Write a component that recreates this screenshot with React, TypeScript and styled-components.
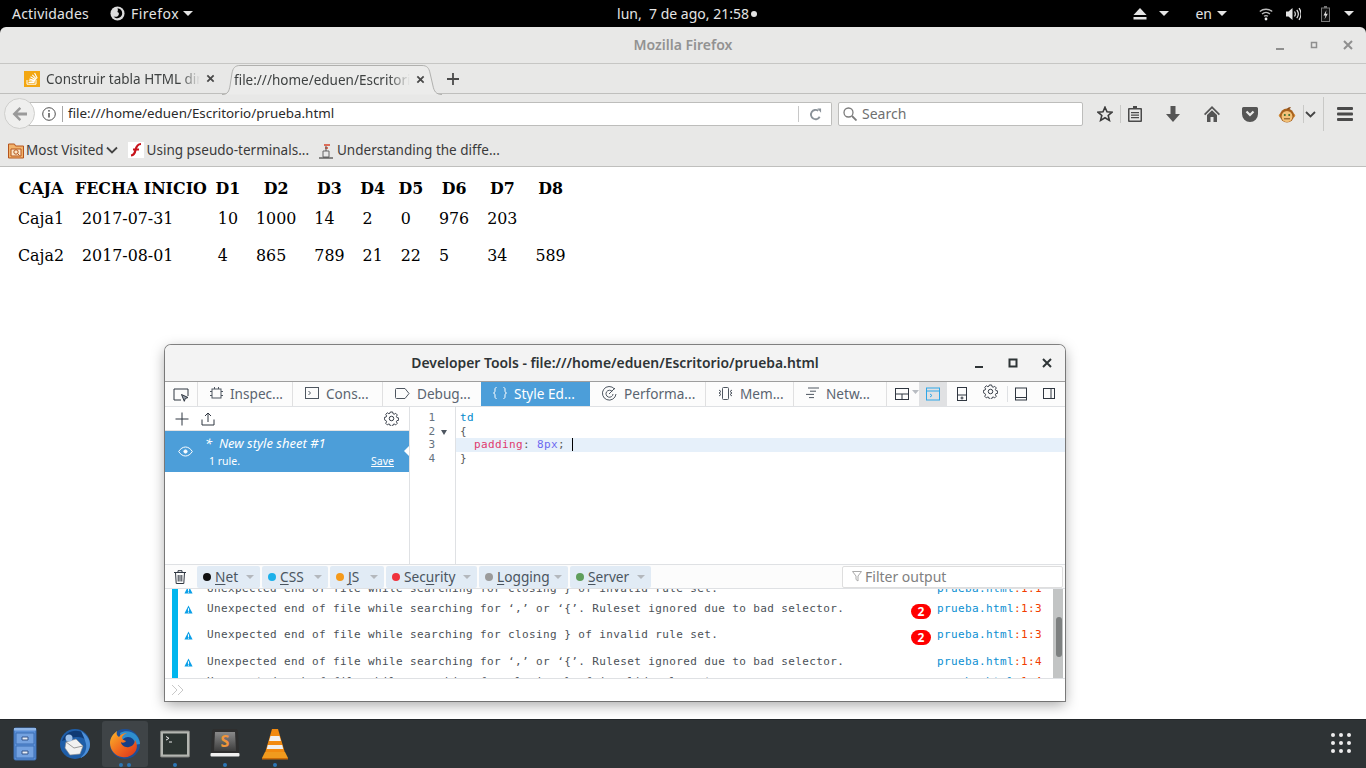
import React from "react";
import styled, { createGlobalStyle } from "styled-components";

const ui = `"Noto Sans", "Open Sans", sans-serif`;
const mono = `"DejaVu Sans Mono", "Liberation Mono", monospace`;

const Global = createGlobalStyle`
  html, body { margin: 0; padding: 0; background: #000; }
  * { box-sizing: border-box; }
`;

const Desktop = styled.div`
  position: relative; width: 1366px; height: 768px; overflow: hidden;
  display: flex; flex-direction: column; background: #000; font-family: ${ui};
`;

/* ---------- GNOME top bar ---------- */
const TopBar = styled.div`
  height: 27px; flex: none; display: grid; grid-template-columns: 1fr auto 1fr;
  align-items: center; color: #e4e4e4; font-size: 14px; padding: 0 12px;
`;
const BarGroup = styled.div<{ $end?: boolean }>`
  display: flex; align-items: center; justify-content: ${p => (p.$end ? "flex-end" : "flex-start")};
`;
const BarItem = styled.span<{ $ml?: number; $ls?: number }>`
  display: inline-flex; align-items: center; margin-left: ${p => p.$ml ?? 0}px; white-space: pre;
  letter-spacing: ${p => p.$ls ?? 0}px;
`;
const Caret = styled.span<{ $ml?: number; $c?: string }>`
  display: inline-block; width: 0; height: 0; margin-left: ${p => p.$ml ?? 0}px;
  border-left: 5px solid transparent; border-right: 5px solid transparent;
  border-top: 5px solid ${p => p.$c ?? "#e4e4e4"};
`;
const Clock = styled.div`
  display: flex; align-items: center; white-space: pre; margin-left: 8px;
`;
const ClockDot = styled.span`
  width: 6px; height: 6px; border-radius: 50%; background: #e4e4e4; margin-left: 2px;
`;

/* ---------- Firefox window ---------- */
const BrowserWindow = styled.div`
  flex: 1; min-height: 0; display: flex; flex-direction: column;
  background: #e8e8e7; border-radius: 6px 6px 0 0; overflow: hidden;
`;
const TitleBar = styled.div`
  position: relative; height: 37px; flex: none; display: flex; align-items: center; justify-content: center;
  border-bottom: 1px solid #c6c6c4; color: #929292; font-size: 14px; font-weight: 600; padding-bottom: 2px;
`;
const WinControls = styled.div`
  position: absolute; right: 10px; top: 10px; display: flex; align-items: center; gap: 18px; height: 16px;
`;
const TabStrip = styled.div`
  position: relative; height: 30px; flex: none; display: flex; align-items: stretch;
  padding-left: 10px; border-bottom: 1px solid #bfbfbd; font-size: 13.5px;
`;
const Tab = styled.div`
  position: relative; display: flex; align-items: center; height: 29px; width: 212px; padding-left: 14px;
  color: #3f4242; white-space: nowrap;
`;
const ActiveTab = styled.div`
  position: relative; display: flex; align-items: center; height: 30px; width: 220px; padding: 0 0 1px 12px;
  margin-top: 1px; color: #3f4242; white-space: nowrap; z-index: 1;
`;
const TabShape = styled.svg`
  position: absolute; left: 0; top: 0; z-index: -1;
`;
const TabTitle = styled.span<{ $w: number; $ml: number }>`
  display: block; width: ${p => p.$w}px; overflow: hidden; margin-left: ${p => p.$ml}px;
  -webkit-mask-image: linear-gradient(90deg, #000 88%, transparent);
  mask-image: linear-gradient(90deg, #000 88%, transparent);
`;
const TabClose = styled.span`
  margin-left: 6px; display: inline-flex; color: #4a4a4a;
`;
const NewTab = styled.span`
  display: inline-flex; margin: 8px 0 0 4px; height: 16px;
`;
const NavBar = styled.div`
  position: relative; height: 40px; flex: none; display: flex; align-items: center; padding: 0 0 0 24px;
`;
const BackButton = styled.div`
  position: absolute; left: 4px; top: 4px; width: 31px; height: 31px; border-radius: 50%; z-index: 2;
  background: #efefee; border: 1px solid #cfcfcd; display: flex; align-items: center; justify-content: center;
`;
const UrlBar = styled.div`
  width: 808px; height: 24px; background: #fff; border: 1px solid #bdbdbb; border-left: 0;
  border-radius: 0 2px 2px 0; display: flex; align-items: center; padding-left: 17px;
  font-size: 13.4px; color: #2a2a2a;
`;
const UrlIcon = styled.span`
  display: flex; margin-left: 1px;
`;
const UrlSep = styled.span`
  width: 1px; height: 16px; background: #a6a6a6; margin: 0 5px 0 6px; flex: none;
`;
const UrlText = styled.span`
  flex: 1; padding-bottom: 2px;
`;
const ReloadCell = styled.span`
  width: 33px; height: 16px; border-left: 1px solid #c8c8c8; display: flex; align-items: center; justify-content: center;
`;
const SearchBox = styled.div`
  width: 245px; height: 24px; margin-left: 6px; background: #fff; border: 1px solid #bdbdbb; border-radius: 2px;
  display: flex; align-items: center; gap: 5px; padding-left: 4px; font-size: 14px; color: #6f6f6f;
`;
const SearchLabel = styled.span`
  padding-bottom: 2px;
`;
const NavIcons = styled.div`
  position: relative; flex: 1; height: 100%;
`;
const NavIcon = styled.span<{ $x: number }>`
  position: absolute; left: ${p => p.$x}px; top: 12px; display: flex;
`;
const NavSep = styled.span<{ $x: number; $h?: number; $t?: number }>`
  position: absolute; left: ${p => p.$x}px; top: ${p => p.$t ?? 10}px; width: 1px; height: ${p => p.$h ?? 20}px; background: #c9c9c7;
`;
const BookmarksBar = styled.div`
  height: 33px; flex: none; display: flex; align-items: center; padding: 0 0 1px 8px;
  border-bottom: 1px solid #bfbfbd; font-size: 13.5px; color: #3a3a3a;
`;
const Bookmark = styled.span<{ $ml?: number; $gap?: number }>`
  display: inline-flex; align-items: center; gap: ${p => p.$gap ?? 3}px; margin-left: ${p => p.$ml ?? 0}px; white-space: nowrap;
`;
const Page = styled.div`
  flex: 1; background: #fff; padding: 9px 8px 8px; font-family: "DejaVu Serif", serif; color: #000;
`;
const DataTable = styled.table`
  border-spacing: 2px; font-size: 15.85px;
`;
const HeadCell = styled.th`
  padding: 1px; font-weight: 700; text-align: center; white-space: nowrap;
`;
const DataCell = styled.td`
  padding: 8px; text-align: left; white-space: nowrap;
`;

/* ---------- Developer tools window (free-floating) ---------- */
const DevWindow = styled.div`
  position: absolute; left: 165px; top: 345px; width: 900px; height: 356px; z-index: 5;
  display: flex; flex-direction: column; background: #fff; border-radius: 6px 6px 0 0; overflow: hidden;
  box-shadow: 0 0 0 1px rgba(70,70,70,.65), 0 4px 14px rgba(0,0,0,.35);
`;
const DevTitle = styled.div`
  position: relative; height: 37px; flex: none; background: #f3f3f3; border-bottom: 1px solid #9e9e9e;
  display: flex; align-items: center; justify-content: center; color: #2e3436; font-size: 13.9px; font-weight: 600; padding-bottom: 2px;
`;
const DevControls = styled.div`
  position: absolute; right: 11px; top: 11px; display: flex; gap: 20px; align-items: center; height: 14px;
`;
const DevTabs = styled.div`
  position: relative; height: 25px; flex: none; display: flex; background: #fcfcfc; border-bottom: 1px solid #dfe1e4;
`;
const PickCell = styled.div`
  width: 33px; display: flex; align-items: center; justify-content: center; border-right: 1px solid #e0e0e1; padding-top: 2px;
`;
const DevTab = styled.div<{ $w: number; $active?: boolean; $plain?: boolean }>`
  width: ${p => p.$w}px; flex: none; display: flex; align-items: center; gap: 7px; padding: 0 0 2px 12px;
  font-size: 13.6px; white-space: nowrap;
  color: ${p => (p.$active ? "#fff" : "#5a6470")};
  background: ${p => (p.$active ? "#4c9ed9" : "transparent")};
  border-right: ${p => (p.$active || p.$plain ? "0" : "1px solid #e0e0e1")};
`;
const ToolButtons = styled.div`
  position: relative; flex: 1;
`;
const ToolHighlight = styled.span`
  position: absolute; left: 32px; top: 0; width: 28px; height: 24px; background: #e0e1e3;
`;
const ToolIcon = styled.span<{ $x: number; $t?: number }>`
  position: absolute; left: ${p => p.$x}px; top: ${p => p.$t ?? 5}px; display: flex;
`;
const ToolSep = styled.span`
  position: absolute; left: 120px; top: 4px; width: 1px; height: 16px; background: #dfe1e4;
`;
const EditorPane = styled.div`
  height: 158px; flex: none; display: flex; border-bottom: 1px solid #dfe1e4;
`;
const Sidebar = styled.div`
  width: 245px; flex: none; border-right: 1px solid #dfe1e4; display: flex; flex-direction: column;
`;
const SidebarTools = styled.div`
  height: 24px; flex: none; display: flex; align-items: center; padding: 0 10px; gap: 12px; border-bottom: 1px solid #e3e3e3;
`;
const ToolSpacer = styled.span`
  flex: 1;
`;
const SheetItem = styled.div`
  position: relative; height: 41px; flex: none; background: #4c9ed9; color: #fff; padding-left: 13px;
  display: grid; grid-template-columns: 27px 1fr;  align-items: center;
`;
const SheetName = styled.div`
  font-size: 13px; font-style: italic; height: 19px; line-height: 17px; white-space: pre;
`;
const SheetMeta = styled.div`
  display: flex; justify-content: space-between; padding: 0 15px 0 4px; font-size: 10.5px; line-height: 14px;
`;
const SaveLink = styled.span`
  text-decoration: underline;
`;
const SheetPointer = styled.span`
  position: absolute; right: 0; top: 15px; width: 0; height: 0;
  border-top: 5px solid transparent; border-bottom: 5px solid transparent; border-right: 5px solid #fff;
`;
const Gutter = styled.div`
  width: 46px; flex: none; border-right: 1px solid #dfe1e4; padding-top: 4px; padding-right: 20px;
  font: 11px/13.6px ${mono}; color: #667380; text-align: right; position: relative;
`;
const GutterLine = styled.div`
  height: 13.6px;
`;
const FoldMark = styled.span`
  position: absolute; left: 31px; top: 23px; width: 0; height: 0;
  border-left: 3px solid transparent; border-right: 3px solid transparent; border-top: 5px solid #4e5660;
`;
const CodeArea = styled.div`
  flex: 1; padding-top: 4px; font: 11px/13.6px ${mono}; letter-spacing: .38px; color: #585959;
`;
const CodeLine = styled.div<{ $active?: boolean }>`
  height: 13.6px; padding-left: 4px; white-space: pre; background: ${p => (p.$active ? "#e6f0fa" : "transparent")};
`;
const Tok = styled.span<{ $c: string }>`
  color: ${p => p.$c};
`;
const CodeCursor = styled.span`
  display: inline-block; width: 1px; height: 13px; background: #000; vertical-align: top; margin-left: 0;
`;
const FilterBar = styled.div`
  height: 24px; flex: none; display: flex; align-items: center; padding-left: 9px; gap: 2px; background: #fcfcfc;
  border-bottom: 1px solid #dfe1e4; position: relative;
`;
const TrashCell = styled.span`
  display: flex; width: 21px; 
`;
const FilterChip = styled.div<{ $w: number }>`
  width: ${p => p.$w}px; height: 22px; flex: none; background: #e1ebf5; border-radius: 2px;
  display: flex; align-items: center; padding-left: 6px; font-size: 13.7px; color: #4a5560; white-space: nowrap;
`;
const ChipDot = styled.span<{ $c: string }>`
  width: 8px; height: 8px; border-radius: 50%; background: ${p => p.$c}; margin-right: 4px; flex: none;
`;
const ChipKey = styled.span`
  text-decoration: underline; text-underline-offset: 2px;
`;
const ChipCaret = styled.span`
  margin-left: auto; margin-right: 6px; width: 0; height: 0;
  border-left: 4px solid transparent; border-right: 4px solid transparent; border-top: 4px solid #b4b8bd;
`;
const FilterInput = styled.div`
  position: absolute; left: 677px; top: 1px; width: 221px; height: 22px; background: #fff; border: 1px solid #dedede;
  border-radius: 2px; display: flex; align-items: center; gap: 3px; padding: 0 0 2px 9px; color: #808080; font-size: 14px;
`;
const Output = styled.div`
  position: relative; height: 90px; flex: none; overflow: hidden; border-bottom: 1px solid #dfe1e4;
  font: 11px/14px ${mono}; letter-spacing: .38px; color: #4b5157;
`;
const OutputBar = styled.span`
  position: absolute; left: 7px; top: 0; bottom: 0; width: 6px; background: #00b6ee; 
`;
const OutputList = styled.div`
  margin-top: -10px;
`;
const LogRow = styled.div<{ $tall?: boolean }>`
  height: ${p => (p.$tall ? 26.4 : 20)}px; display: flex; align-items: flex-start; padding: 3px 0 0 19px;
  position: relative; white-space: pre;
`;
const LogIcon = styled.span`
  width: 23px; flex: none; display: flex; position: relative; top: 3px;
`;
const LogText = styled.span`
  flex: none; width: 730px;
`;
const LogBadge = styled.span`
  position: absolute; left: 746px; top: 4.6px; width: 20px; height: 15px; border-radius: 8px; background: #f00; color: #fff;
  font: 700 12px/15px ${ui}; letter-spacing: 0; text-align: center;
`;
const LogSource = styled.span`
  color: #0a8fd2;
`;
const LogPos = styled.span`
  color: #f13c00;
`;
const ScrollTrack = styled.div`
  position: absolute; right: 2px; top: 0; bottom: 0; width: 10px; background: #c2c4c4;
`;
const ScrollThumb = styled.div`
  position: absolute; left: 3px; top: 28px; width: 6px; height: 40px; border-radius: 3px; background: #7d8080;
`;
const ConsoleInput = styled.div`
  flex: 1; display: flex; align-items: center; padding-left: 6px;
`;

/* ---------- Dock ---------- */
const Dock = styled.div`
  height: 49px; flex: none; background: #2e3335; display: flex; align-items: center; padding-left: 2px; gap: 4px;
  border-top: 1px solid #23272a; position: relative;
`;
const DockSlot = styled.div<{ $active?: boolean }>`
  position: relative; width: 46px; height: 46px; flex: none;
  display: flex; align-items: center; justify-content: center; border-radius: 3px;
  background: ${p => (p.$active ? "#3f4447" : "transparent")};
`;
const DockDots = styled.span`
  position: absolute; bottom: 0; left: 0; right: 0; display: flex; gap: 4px; justify-content: center;
`;
const DockDot = styled.span`
  width: 4px; height: 4px; border-radius: 50%; background: #2d77b5;
`;
const AppGrid = styled.div`
  position: absolute; right: 15px; top: 13px; display: grid; grid-template-columns: repeat(3, 4px); gap: 4px;
`;
const AppGridDot = styled.span`
  width: 4px; height: 4px; border-radius: 50%; background: #eee;
`;

/* ---------- Icons ---------- */
const Gear = ({ s = 16, c = "#2f3640" }: { s?: number; c?: string }) => (
  <svg width={s} height={s} viewBox="0 0 16 16" fill="none" stroke={c} strokeWidth={1.05}>
    <circle cx="8" cy="8" r="2.400" />
    <path d="M6.700 1h2.600l.4 1.900 1.300.6 1.700-1 1.800 1.800-1 1.700.6 1.300 1.900.4v2.600l-1.900.4-.6 1.300 1 1.700-1.800 1.800-1.700-1-1.300.6-.4 1.900H6.700l-.4-1.900-1.300-.6-1.700 1-1.800-1.800 1-1.700-.6-1.300L0 9.700V7.100l1.900-.4.6-1.300-1-1.700 1.800-1.800 1.700 1 1.300-.6z" transform="translate(.4 .1) scale(.95)" />
  </svg>
);
const Warn = () => (
  <svg width="9" height="9" viewBox="0 0 10 10"><path d="M5 .5 9.500 9.500H.5z" fill="#0a9fe8" /><rect x="4.400" y="3.600" width="1.200" height="3" fill="#fff" /><rect x="4.400" y="7.300" width="1.200" height="1.200" fill="#fff" /></svg>
);
const Cross = ({ s = 10, c = "#4a4a4a", w = 2 }: { s?: number; c?: string; w?: number }) => (
  <svg width={s} height={s} viewBox="0 0 10 10" stroke={c} strokeWidth={w}><path d="M1.500 1.500l7 7M8.500 1.500l-7 7" /></svg>
);
const FirefoxBadge = () => (
  <svg width="15" height="15" viewBox="0 0 16 16"><circle cx="8" cy="8" r="7.500" fill="#dcdcdc" /><path d="M8 2.500c3 .3 5 2.400 5 5.300 0 2.900-2.400 5.200-5.200 5.200-1.600 0-3-.7-4-1.900 2.400 1 5.400 0 5.700-2.700.1-1.100-.9-2-1.700-2 .7-1 .8-2.400.2-3.900z" fill="#000" /></svg>
);
const SOIcon = () => (
  <svg width="16" height="16" viewBox="0 0 16 16"><rect width="16" height="16" fill="#f3a712" /><path d="M3 9v4.200h9V9" fill="none" stroke="#fff" strokeWidth="1" /><path d="M4.500 11.500h6M4.700 9.800l6 .6M5.300 8l5.800 1.600M6.500 5.800l5.200 3M8.300 3.800l4.200 4.300M10.600 2l2.600 5.300" stroke="#fff" strokeWidth="1.100" /></svg>
);
const FolderBm = () => (
  <svg width="16" height="18" viewBox="0 0 16 18"><path d="M.5 3h6l1 2h8v12H.5z" fill="#f2b36c" stroke="#b5541c" /><path d="M3 8h10v7H3z" fill="#fbe6c8" stroke="#b5541c" /><circle cx="8" cy="11" r="2.200" fill="none" stroke="#b5541c" /><path d="M9.500 12.500l2 2" stroke="#b5541c" /></svg>
);
const FlashBm = () => (
  <svg width="16" height="16" viewBox="0 0 16 16"><rect width="16" height="16" fill="#fff" /><path d="M13 2C9 2 8.200 5 7.500 8 7 11 6 13 3 13.500" fill="none" stroke="#c8141c" strokeWidth="2.200" /><path d="M5 7.500h6" stroke="#c8141c" strokeWidth="1.800" /></svg>
);
const UnixBm = () => (
  <svg width="16" height="18" viewBox="0 0 16 18"><path d="M5 10h6v6H5z" fill="#e9e9e9" stroke="#666" /><path d="M6 4h6M7 7h3" stroke="#d9442b" strokeWidth="1.600" /><path d="M8 5v5" stroke="#555" /><path d="M1 17h14" stroke="#222" strokeWidth="1.200" /></svg>
);
const Monkey = () => (
  <svg width="18" height="18" viewBox="0 0 18 18"><circle cx="2.800" cy="9.500" r="2" fill="#d08a3a" /><circle cx="15.200" cy="9.500" r="2" fill="#d08a3a" /><circle cx="9" cy="9.500" r="7" fill="#a8621e" /><ellipse cx="9" cy="10.500" rx="5.400" ry="5.500" fill="#f3c27a" /><path d="M9 3c1-2 3-2 4-1.500-1 1-2 2-4 2z" fill="#8a4a14" /><circle cx="6.800" cy="9" r="1" fill="#2f6b2f" /><circle cx="11.200" cy="9" r="1" fill="#2f6b2f" /><path d="M6 12.800h6" stroke="#7a4a1a" /></svg>
);
const Cabinet = () => (
  <svg width="24" height="34" viewBox="0 0 24 34"><rect x="1" y="1" width="22" height="32" rx="1.500" fill="#5b8fd6" stroke="#3a6cb0" /><rect x="1" y="1" width="22" height="2.500" fill="#8fb6e8" /><path d="M3 6h18v11H3zM3 19h18v12H3z" fill="#74a2e0" stroke="#3d6fb4" /><path d="M9 10h6v3H9zM9 24h6v3H9z" fill="#e8edf4" stroke="#34558a" /></svg>
);
const Thunderbird = () => (
  <svg width="32" height="32" viewBox="0 0 32 32"><circle cx="16" cy="16" r="15" fill="#1f5ea8" /><path d="M3 13C6 4 16 0 25 5c4 3 6 8 6 12-3-5-7-8-12-8-6 0-9 2-16 4z" fill="#0f3a74" /><path d="M22 3c5 3 9 8 9 13s-3 12-10 14c5-4 7-9 6-14-1-4-3-9-5-13z" fill="#4c8fd8" /><path d="M7 14l10-3 7 7-3 8-10 1-5-7z" fill="#f1f1f1" stroke="#8b8b8b" strokeWidth=".6" /><path d="M7 14l8 6 9-2" fill="none" stroke="#9a9a9a" /><circle cx="10" cy="10" r="3.500" fill="#9fc2ea" /></svg>
);
const Firefox = () => (
  <svg width="32" height="32" viewBox="0 0 32 32"><defs><linearGradient id="ffo" x1="0" y1="0" x2="1" y2="1"><stop offset="0" stopColor="#fbb72a" /><stop offset=".55" stopColor="#f0641e" /><stop offset="1" stopColor="#d8331c" /></linearGradient></defs><circle cx="16" cy="16" r="15" fill="#1d4f96" /><path d="M11 5c5-3 12-2 16 2 3 3 4 7 4 9l-6 1-8-2-5-5z" fill="#2f8fce" /><circle cx="19" cy="16" r="7" fill="#163f86" /><path d="M8 3c-1 3 0 5 2 6 2-3 5-4 8-4-3 1-5 3-5 5 0 1 1 2 4 3-1 2-4 2-5 1 0 3 4 6 8 5 4-1 6-4 6-7 2 3 3 8 0 12-3 4-8 6-13 5C6 28 1 22 1 15 1 10 4 6 8 3z" fill="url(#ffo)" /></svg>
);
const Terminal = () => (
  <svg width="30" height="30" viewBox="0 0 30 30"><rect x=".5" y="2" width="29" height="26" rx="1" fill="#b4b6b1" stroke="#7c7e7a" /><rect x="3" y="4.500" width="24" height="21" fill="#2c3431" /><path d="M6 7.500l3 1.800-3 1.800M9 13h3" stroke="#e8e8e8" fill="none" /></svg>
);
const Sublime = () => (
  <svg width="30" height="30" viewBox="0 0 30 30"><defs><linearGradient id="sbl" x1="0" y1="0" x2="0" y2="1"><stop offset="0" stopColor="#8a8a8a" /><stop offset="1" stopColor="#3d3d3d" /></linearGradient></defs><rect x=".5" y="24" width="29" height="3.500" rx="1" fill="#f0f0f0" /><path d="M2 2c0-1 1-2 2-2h22c1 0 2 1 2 2l1 22H1z" fill="#2e2e2e" /><path d="M5 3h20l1 19H4z" fill="url(#sbl)" /><text x="15" y="18" fontSize="16" fontWeight="700" fontFamily="'Noto Sans', sans-serif" fill="#f0953a" textAnchor="middle">S</text></svg>
);
const Vlc = () => (
  <svg width="28" height="32" viewBox="0 0 28 32"><path d="M11 1h6l7 24H4z" fill="#f28a10" /><path d="M9.500 8h9l1.400 5H8.100zM6.800 17h14.400l1 4H5.800z" fill="#f0f0f0" /><path d="M4 24h20l3 6H1z" fill="#f19a1e" /><path d="M1 30h26v1.500H1z" fill="#c96a08" /></svg>
);

const rows = [
  ["Caja1", "2017-07-31", "10", "1000", "14", "2", "0", "976", "203", ""],
  ["Caja2", "2017-08-01", "4", "865", "789", "21", "22", "5", "34", "589"],
];
const heads = ["CAJA", "FECHA INICIO", "D1", "D2", "D3", "D4", "D5", "D6", "D7", "D8"];

const chips: { w: number; c: string; pre: string; key: string; post: string }[] = [
  { w: 63, c: "#111", pre: "", key: "N", post: "et" },
  { w: 66, c: "#1cb0ea", pre: "", key: "C", post: "SS" },
  { w: 54, c: "#f59a1a", pre: "", key: "J", post: "S" },
  { w: 91, c: "#f0323c", pre: "Sec", key: "u", post: "rity" },
  { w: 89, c: "#9b9b9b", pre: "", key: "L", post: "ogging" },
  { w: 81, c: "#5f9e5b", pre: "", key: "S", post: "erver" },
];

const logs = [
  { t: "Unexpected end of file while searching for closing } of invalid rule set.", l: ":1:1" },
  { t: "Unexpected end of file while searching for ‘,’ or ‘{’. Ruleset ignored due to bad selector.", l: ":1:3", b: true },
  { t: "Unexpected end of file while searching for closing } of invalid rule set.", l: ":1:3", b: true },
  { t: "Unexpected end of file while searching for ‘,’ or ‘{’. Ruleset ignored due to bad selector.", l: ":1:4" },
  { t: "Unexpected end of file while searching for closing } of invalid rule set.", l: ":1:4" },
];

export default function App() {
  return (
    <Desktop>
      <Global />
      <TopBar>
        <BarGroup>
          <BarItem $ls={0.2}>Actividades</BarItem>
          <BarItem $ml={21}><FirefoxBadge /></BarItem>
          <BarItem $ml={6} $ls={0.5}>Firefox</BarItem>
          <Caret $ml={4} />
        </BarGroup>
        <Clock>lun,  7 de ago, 21:58<ClockDot /></Clock>
        <BarGroup $end>
          <BarItem><svg width="14" height="12" viewBox="0 0 14 12" fill="#e4e4e4"><path d="M7 0l6.500 7H.5z" /><rect x="0.500" y="9" width="13" height="2.500" /></svg></BarItem>
          <Caret $ml={12} />
          <BarItem $ml={26}>en</BarItem>
          <Caret $ml={5} />
          <BarItem $ml={32}><svg width="14" height="14" viewBox="0 0 14 14" fill="none" stroke="#bbb" strokeWidth="1.300"><path d="M.8 4.500c3.500-3 9-3 12.400 0M3 7c2.300-2 5.700-2 8 0M5 9.300c1.200-.9 2.800-.9 4 0" /><circle cx="7" cy="12" r="1.400" fill="#eee" stroke="none" /></svg></BarItem>
          <BarItem $ml={13}><svg width="15" height="14" viewBox="0 0 15 14"><path d="M0 4.500h2.500L6.500 1v12L2.500 9.500H0z" fill="#e4e4e4" /><path d="M8.500 4.500c1 1.500 1 3.500 0 5M10.800 2.800c1.800 2.500 1.800 6 0 8.400M13 1.200c2.500 3.500 2.500 8 0 11.600" fill="none" stroke="#e4e4e4" strokeWidth="1.200" /></svg></BarItem>
          <BarItem $ml={20}><svg width="9" height="16" viewBox="0 0 9 16"><path d="M3 0h3v1.500h3V16H0V1.500h3z" fill="#777" /><rect x="1" y="2.500" width="7" height="12.500" fill="#111" /><path d="M5.500 4L2.500 9.500h2L3.500 13.500 6.800 7.800H4.800z" fill="#e4e4e4" /></svg></BarItem>
          <Caret $ml={14} />
        </BarGroup>
      </TopBar>

      <BrowserWindow>
        <TitleBar>
          Mozilla Firefox
          <WinControls>
            <svg width="16" height="16" viewBox="0 0 16 16"><rect x="4" y="11" width="8" height="2" fill="#8f8f8f" /></svg>
            <svg width="16" height="16" viewBox="0 0 16 16"><rect x="5.500" y="5.500" width="5" height="5" fill="none" stroke="#8f8f8f" strokeWidth="1.500" /></svg>
            <svg width="16" height="16" viewBox="0 0 16 16" stroke="#8f8f8f" strokeWidth="2"><path d="M4 4l8 8M12 4l-8 8" /></svg>
          </WinControls>
        </TitleBar>
        <TabStrip>
          <Tab>
            <SOIcon />
            <TabTitle $w={154} $ml={6}>Construir tabla HTML dinámica</TabTitle>
            <TabClose><Cross s={9} /></TabClose>
          </Tab>
          <ActiveTab>
            <TabShape width="220" height="30" viewBox="0 0 220 30"><path d="M0 29.500C6 29.500 7 26 8 21L10 8C11 3 13 .5 18 .5H200C205 .5 207 3 208 8L211 21C212 26 214 29.500 220 29.500" fill="#ececeb" stroke="#b0b0ae" /></TabShape>
            <TabTitle $w={176} $ml={0}>file:///home/eduen/Escritorio/prueba</TabTitle>
            <TabClose><Cross s={9} /></TabClose>
          </ActiveTab>
          <NewTab><svg width="14" height="14" viewBox="0 0 14 14" stroke="#4a4a4a" strokeWidth="1.800"><path d="M7 1v12M1 7h12" /></svg></NewTab>
        </TabStrip>
        <NavBar>
          <BackButton><svg width="16" height="14" viewBox="0 0 16 14" fill="#9a9a9a"><path d="M7.500 0l1.700 1.700L5.500 5.500H15v3H5.500l3.700 3.800L7.500 14 .5 7z" /></svg></BackButton>
          <UrlBar>
            <UrlIcon><svg width="14" height="14" viewBox="0 0 14 14" fill="none" stroke="#4e4e4e"><circle cx="7" cy="7" r="6.300" /><path d="M7 6v4.500" strokeWidth="1.500" /><circle cx="7" cy="3.800" r=".9" fill="#4e4e4e" stroke="none" /></svg></UrlIcon>
            <UrlSep />
            <UrlText>file:///home/eduen/Escritorio/prueba.html</UrlText>
            <ReloadCell><svg width="13" height="13" viewBox="0 0 14 14" fill="none" stroke="#8a9299" strokeWidth="2"><path d="M11.500 9.500A5 5 0 1 1 10 3" /><path d="M9 .5h4v4.500z" fill="#8a9299" stroke="none" /></svg></ReloadCell>
          </UrlBar>
          <SearchBox>
            <svg width="14" height="14" viewBox="0 0 14 14" fill="none" stroke="#7b7b7b" strokeWidth="1.300"><circle cx="5.500" cy="5.500" r="4.500" /><path d="M9 9l4.500 4.500" strokeWidth="1.800" /></svg>
            <SearchLabel>Search</SearchLabel>
          </SearchBox>
          <NavIcons>
            <NavIcon $x={14}><svg width="16" height="16" viewBox="0 0 16 16" fill="none" stroke="#3c3c3c" strokeWidth="1.600"><path d="M8 1.200l2 4.600 5 .4-3.800 3.300 1.200 4.900L8 11.800l-4.400 2.600 1.200-4.900L1 6.200l5-.4z" /></svg></NavIcon>
            <NavSep $x={37} $t={11} $h={18} />
            <NavIcon $x={45}><svg width="14" height="16" viewBox="0 0 14 16"><path d="M5 0h4v2h4a1 1 0 0 1 1 1v12a1 1 0 0 1-1 1H1a1 1 0 0 1-1-1V3a1 1 0 0 1 1-1h4z" fill="#4a4a4a" /><rect x="1.500" y="3.500" width="11" height="11" fill="#e8e8e7" /><path d="M3 6h8v1.300H3zM3 8.500h8v1.300H3zM3 11h8v1.300H3z" fill="#4a4a4a" /></svg></NavIcon>
            <NavIcon $x={83}><svg width="14" height="16" viewBox="0 0 14 16" fill="#555"><path d="M4.500 0h5v8H14l-7 8-7-8h4.500z" /></svg></NavIcon>
            <NavIcon $x={121}><svg width="16" height="16" viewBox="0 0 16 16" fill="#555"><path d="M8 0L0 8l1.200 1.200L8 2.500l6.800 6.700L16 8z" /><path d="M8 4.200L3 9v7h3.500v-5h3v5H13V9z" /></svg></NavIcon>
            <NavIcon $x={159}><svg width="16" height="16" viewBox="0 0 16 16"><path d="M1.500 1h13A1.500 1.500 0 0 1 16 2.500V8a8 8 0 0 1-16 0V2.500A1.500 1.500 0 0 1 1.500 1z" fill="#555" /><path d="M4.500 5.500L8 9l3.500-3.500" fill="none" stroke="#e8e8e7" strokeWidth="2.200" /></svg></NavIcon>
            <NavIcon $x={195}><Monkey /></NavIcon>
            <NavSep $x={220} $t={11} $h={18} />
            <NavIcon $x={222}><svg width="11" height="16" viewBox="0 0 11 16" fill="none" stroke="#444" strokeWidth="1.800"><path d="M1 6l4.500 4.500L10 6" /></svg></NavIcon>
            <NavSep $x={240} $t={3} $h={34} />
            <NavIcon $x={254}><svg width="16" height="16" viewBox="0 0 16 16" fill="#4a4a4a"><rect y="1" width="16" height="3" rx="1" /><rect y="6.500" width="16" height="3" rx="1" /><rect y="12" width="16" height="3" rx="1" /></svg></NavIcon>
          </NavIcons>
        </NavBar>
        <BookmarksBar>
          <Bookmark $gap={2}><FolderBm />Most Visited<svg width="12" height="10" viewBox="0 0 12 10" fill="none" stroke="#444" strokeWidth="1.800"><path d="M1 2.500l5 5 5-5" /></svg></Bookmark>
          <Bookmark $ml={10}><FlashBm />Using pseudo-terminals...</Bookmark>
          <Bookmark $ml={9}><UnixBm />Understanding the diffe...</Bookmark>
        </BookmarksBar>
        <Page>
          <DataTable>
            <thead>
              <tr>{heads.map(h => <HeadCell key={h}>{h}</HeadCell>)}</tr>
            </thead>
            <tbody>
              {rows.map(r => (
                <tr key={r[0]}>{r.map((c, i) => <DataCell key={i}>{c}</DataCell>)}</tr>
              ))}
            </tbody>
          </DataTable>
        </Page>
      </BrowserWindow>

      <DevWindow>
        <DevTitle>
          Developer Tools - file:///home/eduen/Escritorio/prueba.html
          <DevControls>
            <svg width="14" height="14" viewBox="0 0 14 14"><rect x="3" y="10" width="8" height="2" fill="#2e3436" /></svg>
            <svg width="14" height="14" viewBox="0 0 14 14"><rect x="3.500" y="3.500" width="7" height="7" fill="none" stroke="#2e3436" strokeWidth="2" /></svg>
            <svg width="14" height="14" viewBox="0 0 14 14" stroke="#2e3436" strokeWidth="2"><path d="M3 3l8 8M11 3l-8 8" /></svg>
          </DevControls>
        </DevTitle>
        <DevTabs>
          <PickCell><svg width="16" height="14" viewBox="0 0 16 14" fill="none" stroke="#2f3640"><path d="M15 8V1H1v11h7" /><path d="M8.500 6.500l6.500 3-2.700 1-1 2.800z" fill="#9aa3ad" /></svg></PickCell>
          <DevTab $w={95}><svg width="13" height="13" viewBox="0 0 13 13" fill="none" stroke="#4e5660"><rect x="2" y="2" width="9" height="9" /><path d="M0 4.500h2M0 8.500h2M11 4.500h2M11 8.500h2M4.500 0v2M8.500 0v2" /></svg>Inspec...</DevTab>
          <DevTab $w={90}><svg width="14" height="12" viewBox="0 0 14 12" fill="none" stroke="#4e5660"><rect x=".5" y=".5" width="13" height="11" /><path d="M3.500 4l2 2-2 2" /></svg>Cons...</DevTab>
          <DevTab $w={98} $plain><svg width="15" height="11" viewBox="0 0 15 11" fill="none" stroke="#4e5660"><path d="M1.500.5h8.500l4 5-4 5H1.500a1 1 0 0 1-1-1v-8a1 1 0 0 1 1-1z" /></svg>Debug...</DevTab>
          <DevTab $w={109} $active><svg width="14" height="12" viewBox="0 0 14 12" fill="none" stroke="#fff"><path d="M3.500.5C2 .5 2 1.500 2 3s0 2.500-1.500 3C2 6.500 2 7.500 2 9s0 2.500 1.500 2.500M10.500.5C12 .5 12 1.500 12 3s0 2.500 1.500 3C12 6.500 12 7.500 12 9s0 2.500-1.500 2.500" /></svg>Style Ed...</DevTab>
          <DevTab $w={116}><svg width="15" height="15" viewBox="0 0 15 15" fill="none" stroke="#4e5660"><path d="M12.500 3A6.800 6.800 0 1 0 14 8" /><path d="M10.200 5.500a3.500 3.500 0 1 0 .8 2.500" /><path d="M7 8l6-6" /></svg>Performa...</DevTab>
          <DevTab $w={88}><svg width="15" height="13" viewBox="0 0 15 13" fill="none" stroke="#4e5660"><rect x="4.500" y=".5" width="6" height="12" rx="1" /><path d="M1 3l2 1.500L1 6l2 1.500L1 9M14 3l-2 1.500L14 6l-2 1.500L14 9" /></svg>Mem...</DevTab>
          <DevTab $w={93}><svg width="13" height="12" viewBox="0 0 13 12" stroke="#4e5660"><path d="M2 1h11M4 4.200h6M0 7.400h8M3 10.600h5" /></svg>Netw...</DevTab>
          <ToolButtons>
            <ToolHighlight />
            <ToolIcon $x={8}><svg width="14" height="14" viewBox="0 0 14 14" fill="none" stroke="#2f3640"><rect x=".5" y="1.500" width="13" height="11" /><path d="M.5 7h13M7 7v5.500" /></svg></ToolIcon>
            <ToolIcon $x={25}><svg width="7" height="12" viewBox="0 0 7 12" fill="#b8bcc2"><path d="M0 3h7L3.500 7z" /></svg></ToolIcon>
            <ToolIcon $x={39}><svg width="14" height="14" viewBox="0 0 14 14" fill="none" stroke="#2fa7e8"><rect x=".5" y="1" width="13" height="12" /><path d="M.5 4h13M4 7l2 1.500L4 10" /></svg></ToolIcon>
            <ToolIcon $x={70}><svg width="10" height="14" viewBox="0 0 10 14" fill="none" stroke="#2f3640"><rect x=".5" y=".5" width="9" height="13" /><path d="M.5 8h9" /><circle cx="5" cy="11" r="1" /></svg></ToolIcon>
            <ToolIcon $x={96} $t={2}><Gear s={15} /></ToolIcon>
            <ToolSep />
            <ToolIcon $x={128}><svg width="12" height="14" viewBox="0 0 12 14" fill="none" stroke="#2f3640"><rect x=".5" y="1" width="11" height="12" /><path d="M.5 10.500h11" /></svg></ToolIcon>
            <ToolIcon $x={156}><svg width="12" height="14" viewBox="0 0 12 14" fill="none" stroke="#2f3640"><rect x=".5" y="1.500" width="11" height="10" /><path d="M8 1.500v10" /></svg></ToolIcon>
          </ToolButtons>
        </DevTabs>
        <EditorPane>
          <Sidebar>
            <SidebarTools>
              <svg width="14" height="14" viewBox="0 0 14 14" stroke="#2f3640"><path d="M7 .5v13M.5 7h13" /></svg>
              <svg width="14" height="14" viewBox="0 0 14 14" fill="none" stroke="#2f3640"><path d="M1 7.500V13h12V7.500M7 10V1M4 4l3-3 3 3" /></svg>
              <ToolSpacer />
              <Gear s={15} />
            </SidebarTools>
            <SheetItem>
              <svg width="15" height="11" viewBox="0 0 15 11" fill="none" stroke="#fff"><path d="M.7 5.500C2.500 2.500 5 1 7.500 1s5 1.500 6.800 4.500C12.500 8.500 10 10 7.500 10S2.500 8.500.7 5.500z" /><circle cx="7.500" cy="5.500" r="1.600" fill="#fff" /></svg>
              <div>
                <SheetName>*  New style sheet #1</SheetName>
                <SheetMeta><span>1 rule.</span><SaveLink>Save</SaveLink></SheetMeta>
              </div>
              <SheetPointer />
            </SheetItem>
          </Sidebar>
          <Gutter>
            {[1, 2, 3, 4].map(n => <GutterLine key={n}>{n}</GutterLine>)}
            <FoldMark />
          </Gutter>
          <CodeArea>
            <CodeLine><Tok $c="#0088cc">td</Tok></CodeLine>
            <CodeLine>{"{"}</CodeLine>
            <CodeLine $active>{"  "}<Tok $c="#df3a6e">padding</Tok>: <Tok $c="#6b69f0">8px</Tok>; <CodeCursor /></CodeLine>
            <CodeLine>{"}"}</CodeLine>
          </CodeArea>
        </EditorPane>
        <FilterBar>
          <TrashCell><svg width="12" height="14" viewBox="0 0 12 14" fill="none" stroke="#2f3640"><path d="M0 2.500h12M4 2.500V.7h4v1.800M1.500 2.500l.7 11h7.600l.7-11M4.200 5v6.500M6 5v6.500M7.800 5v6.500" /></svg></TrashCell>
          {chips.map(c => (
            <FilterChip key={c.key + c.post} $w={c.w}>
              <ChipDot $c={c.c} />{c.pre}<ChipKey>{c.key}</ChipKey>{c.post}<ChipCaret />
            </FilterChip>
          ))}
          <FilterInput>
            <svg width="10" height="11" viewBox="0 0 10 11" fill="none" stroke="#aaa"><path d="M.5.5h9L6 5v5L4 8.500V5z" /></svg>
            Filter output
          </FilterInput>
        </FilterBar>
        <Output>
          <OutputBar />
          <OutputList>
            {logs.map((l, i) => (
              <LogRow key={i} $tall={l.b}>
                <LogIcon><Warn /></LogIcon>
                <LogText>{l.t}</LogText>
                {l.b && <LogBadge>2</LogBadge>}
                <LogSource>prueba.html</LogSource><LogPos>{l.l}</LogPos>
              </LogRow>
            ))}
          </OutputList>
          <ScrollTrack><ScrollThumb /></ScrollTrack>
        </Output>
        <ConsoleInput>
          <svg width="14" height="12" viewBox="0 0 14 12" fill="none" stroke="#c8c8c8"><path d="M1 1l5 5-5 5M7 1l5 5-5 5" /></svg>
        </ConsoleInput>
      </DevWindow>

      <Dock>
        <DockSlot><Cabinet /></DockSlot>
        <DockSlot><Thunderbird /></DockSlot>
        <DockSlot $active><Firefox /><DockDots><DockDot /><DockDot /></DockDots></DockSlot>
        <DockSlot><Terminal /><DockDots><DockDot /></DockDots></DockSlot>
        <DockSlot><Sublime /><DockDots><DockDot /></DockDots></DockSlot>
        <DockSlot><Vlc /><DockDots><DockDot /></DockDots></DockSlot>
        <AppGrid>{Array.from({ length: 9 }).map((_, i) => <AppGridDot key={i} />)}</AppGrid>
      </Dock>
    </Desktop>
  );
}
